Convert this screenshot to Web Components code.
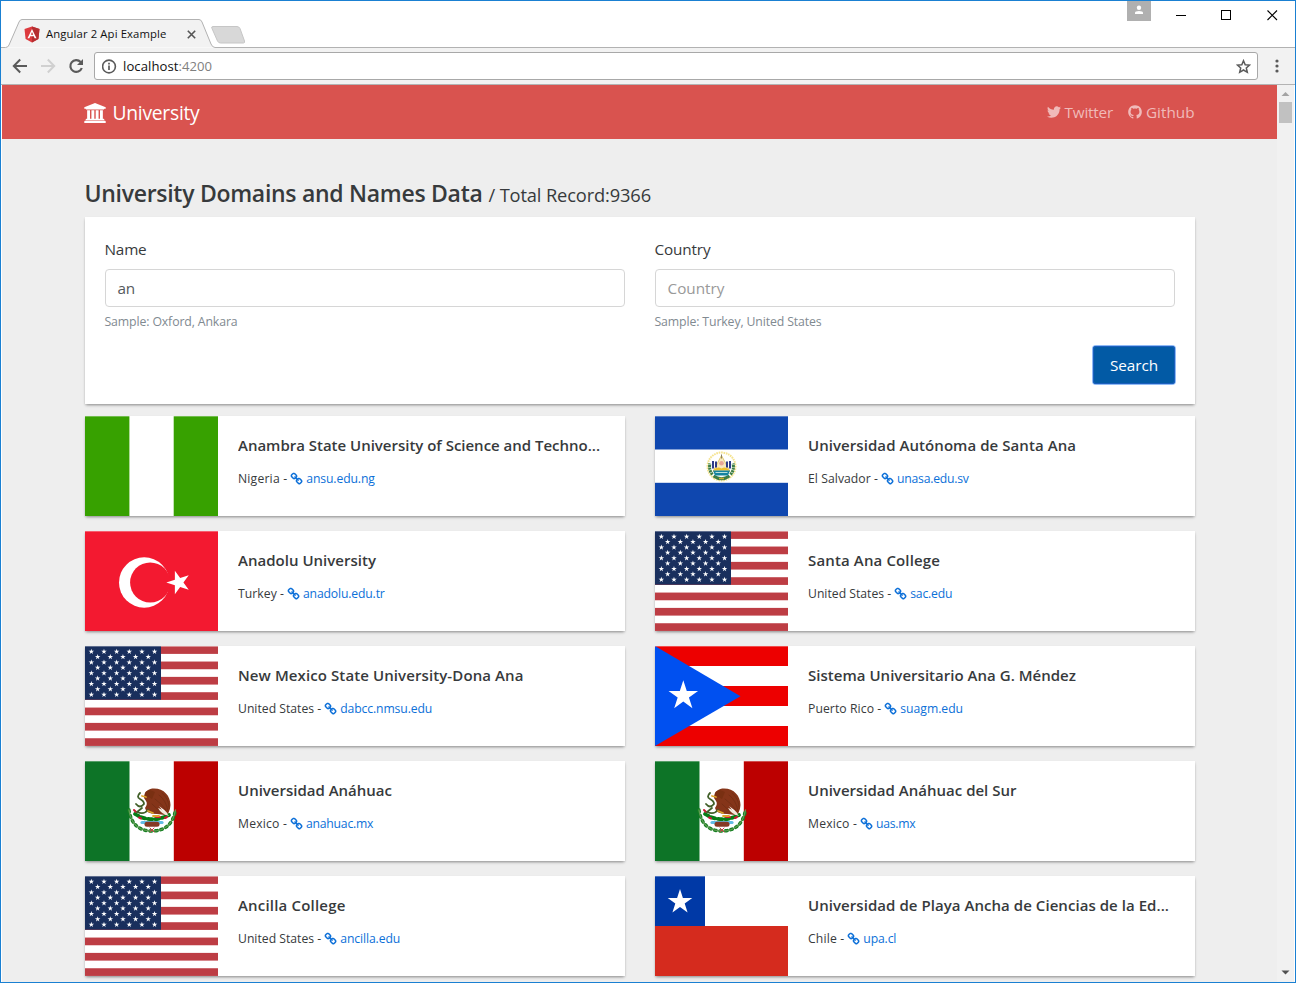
<!DOCTYPE html>
<html lang="en">
<head>
<meta charset="utf-8">
<title>Angular 2 Api Example</title>
<style>
html,body{margin:0;padding:0;background:#eee}
body{font-family:"Open Sans","Noto Sans",sans-serif;color:#373a3c;overflow:hidden}
</style>
</head>
<body>
<browser-window>
  <browser-tabs slot="tabs"></browser-tabs>
  <browser-toolbar slot="toolbar"></browser-toolbar>
  <university-app></university-app>
</browser-window>
<script>
const define = (name, html, setup) => customElements.define(name, class extends HTMLElement {
  connectedCallback() {
    if (this.shadowRoot) return;
    const t = document.createElement('template');
    t.innerHTML = typeof html === 'function' ? html(this) : html;
    this.attachShadow({mode: 'open'}).appendChild(t.content.cloneNode(true));
    if (setup) setup(this);
  }
});

/* Single line of text tracked to a given width */
define('fit-text', `<style>:host{display:inline-block;white-space:nowrap}span{display:inline-block}</style><span><slot></slot></span>`, el => {
  const w = +el.getAttribute('w');
  const span = el.shadowRoot.querySelector('span');
  const n = el.textContent.length;
  const real = span.getBoundingClientRect().width;
  if (w && real) span.style.letterSpacing = ((w - real) / n).toFixed(4) + 'px';
});

const ICONS = {
  twitter: ['0 0 1792 1792', 'M1684 408q-67 98-162 167 1 14 1 42 0 130-38 259.5t-115.5 248.5-184.5 210.5-258 146-323 54.5q-271 0-496-145 35 4 78 4 225 0 401-138-105-2-188-64.5t-114-159.5q33 5 61 5 43 0 85-11-112-23-185.500-111.500t-73.500-205.500v-4q68 38 146 41-66-44-105-115t-39-154q0-88 44-163 121 149 294.500 238.500t371.500 99.500q-8-38-8-74 0-134 94.500-228.500t228.500-94.500q140 0 236 102 109-21 205-78-37 115-142 178 93-10 186-50z'],
  github: ['0 0 1792 1792', 'M896 128q209 0 385.500 103t279.500 279.500 103 385.500q0 251-146.500 451.500t-378.500 277.500q-27 5-40-7t-13-30q0-3 .5-76.500t.5-134.500q0-97-52-142 57-6 102.500-18t94-39 81-66.500 53-105 20.500-150.500q0-119-79-206 37-91-8-204-28-9-81 11t-92 44l-38 24q-93-26-192-26t-192 26q-16-11-42.500-27t-83.500-38.500-85-13.500q-45 113-8 204-79 87-79 206 0 85 20.500 150t52.500 105 80.500 67 94 39 102.500 18q-39 36-49 103-21 10-45 15t-57 5-65.500-21.500-55.500-62.500q-19-32-48.500-52t-49.500-24l-20-3q-21 0-29 4.500t-5 11.500 9 14 13 12l7 5q22 10 43.500 38t31.500 51l10 23q13 38 44 61.500t67 30 69.500 7 55.500-3.500l23-4q0 38 .5 88.500t.5 54.500q0 18-13 30t-40 7q-232-77-378.500-277.500t-146.500-451.500q0-209 103-385.500t279.500-279.500 385.500-103z'],
  link: ['64 64 1664 1664', 'M1456 1216q0-40-28-68l-208-208q-28-28-68-28-42 0-72 32 3 3 19 18.500t21.500 21.500 15 19 13 25.500 3.500 27.500q0 40-28 68t-68 28q-15 0-27.500-3.500t-25.500-13-19-15-21.500-21.500-18.500-19q-33 31-33 73 0 40 28 68l206 207q27 27 68 27 40 0 68-26l147-146q28-28 28-67zm-703-705q0-40-28-68l-206-207q-28-28-68-28-39 0-68 27l-147 146q-28 28-28 67 0 40 28 68l208 208q27 27 68 27 42 0 72-31-3-3-19-18.500t-21.500-21.500-15-19-13-25.500-3.500-27.500q0-40 28-68t68-28q15 0 27.500 3.500t25.500 13 19 15 21.500 21.500 18.500 19q33-31 33-73zm895 705q0 120-85 203l-147 146q-83 83-203 83-121 0-204-85l-206-207q-83-83-83-203 0-123 88-209l-88-88q-86 88-208 88-120 0-204-84l-208-208q-84-84-84-204t85-203l147-146q83-83 203-83 121 0 204 85l206 207q83 83 83 203 0 123-88 209l88 88q86-88 208-88 120 0 204 84l208 208q84 84 84 204z'],
  university: ['0 0 1920 1792', 'M960 0l960 384v128h-128q0 26-20.500 45t-48.500 19h-1526q-28 0-48.500-19t-20.500-45h-128v-128zm-704 640h256v768h128v-768h256v768h128v-768h256v768h128v-768h256v768h59q28 0 48.500 19t20.500 45v64h-1664v-64q0-26 20.500-45t48.500-19h59v-768zm1595 960q28 0 48.500 19t20.500 45v128h-1920v-128q0-26 20.500-45t48.500-19h1782z']
};
define('fa-icon', el => {
  const [vb, d] = ICONS[el.getAttribute('name')];
  return `<style>:host{display:block;flex:none}:host([name=link]) path{stroke:currentColor;stroke-width:20}svg{display:block;width:100%;height:100%;fill:currentColor;overflow:visible}</style><svg viewBox="${vb}"><path d="${d}"/></svg>`;
});

/* ---- flags ---- */
const star = (cx, cy, r, rot = -90) => {
  const p = [];
  for (let i = 0; i < 10; i++) {
    const a = (rot + i * 36) * Math.PI / 180, q = i % 2 ? r * .382 : r;
    p.push((cx + q * Math.cos(a)).toFixed(2) + ',' + (cy + q * Math.sin(a)).toFixed(2));
  }
  return `<polygon fill="#fff" points="${p.join(' ')}"/>`;
};
const rect = (x, y, w, h, f) => `<rect x="${x}" y="${y}" width="${w}" height="${h}" fill="${f}"/>`;
const FLAGS = {
  ng: () => rect(0, 0, 44.4, 100, '#37a100') + rect(88.7, 0, 44.3, 100, '#37a100'),
  sv: () => rect(0, 0, 133, 33.5, '#0f47af') + rect(0, 66.8, 133, 33.2, '#0f47af') +
    `<g transform="translate(66.500 50.500)" fill="none">
      <circle r="14" stroke="#f5e38f" stroke-width="2" stroke-dasharray="1.600 .8" transform="rotate(120)"/>
      <path d="M-9 8A11.800 11.800 0 0 1-11.500-3M9 8A11.800 11.800 0 0 0 11.500-3" stroke="#3d7d45" stroke-width="3" stroke-dasharray="2.200 .5"/>
      <path d="M-8 9.500Q0 15 8 9.500" stroke="#3d7d45" stroke-width="3"/>
      <path d="M0-11L-8.500 5h17z" fill="#f7e8c0" stroke="#d7bd52" stroke-width=".8"/>
      <path d="M-8.500 -5.500v7.500M-5.500 -5v6M8.500-5.500v7.500M5.500-5v6" stroke="#18277c" stroke-width="1.800"/>
      <path d="M0-12v4" stroke="#8a8060" stroke-width="1"/>
      <circle cy="-3.200" r="2.300" fill="#e8a595"/>
      <path d="M-8.500 4Q-4-1 0 2Q4-1 8.500 4z" fill="#efc22c"/>
      <path d="M-8.500 4h17l-2 5h-13z" fill="#1583a0"/><path d="M-6 6h12" stroke="#b9e1dc" stroke-width="1"/>
      <path d="M-2.500 12h5" stroke="#c9ac32" stroke-width="1.500"/></g>`,
  tr: () => rect(0, 0, 133, 100, '#f31930') + '<circle cx="59.200" cy="51.500" r="25.200" fill="#fff"/><circle cx="65.200" cy="51.500" r="20.100" fill="#f31930"/>' + star(93.7, 51.5, 12.4, 180),
  us: () => {
    let s = '';
    for (let i = 0; i < 13; i += 2) s += rect(0, (i * 7.67 + .2).toFixed(2), 133, 7.7, '#bd3d44');
    s += rect(0, 0, 76, 53.7, '#192f5d');
    for (let r = 0; r < 9; r++) for (let c = r % 2; c < 11; c += 2) s += star(6.35 + c * 6.32, 5.6 + r * 5.37, 2.9);
    return s;
  },
  pr: () => [0, 40, 80].map(y => rect(0, y, 133, 20, '#ed0000')).join('') + '<path d="M0 0L85.500 50.200L0 100z" fill="#0050f0"/>' + star(28.3, 49.7, 15.5),
  mx: () => rect(0, 0, 44.5, 100, '#0d7427') + rect(88.8, 0, 44.2, 100, '#bc0000') +
    `<g fill="none" stroke-linecap="round">
      <path d="M44 49C46 63 54 70 67 70S88 63 90.500 49" stroke="#147f20" stroke-width="3.400" stroke-dasharray="1.800 3.600"/>
      <path d="M44 49C46 63 54 70 67 70S88 63 90.500 49" stroke="#5f9a52" stroke-width="1.300"/>
      <path d="M50 53Q66 63 84 54" stroke="#087d16" stroke-width="3.800" stroke-dasharray="4 3"/>
      <path d="M57 61.500h20" stroke="#62bde5" stroke-width="3.200"/>
      <path d="M62 63.200h10" stroke="#863a24" stroke-width="5"/>
      <path d="M65 67l4 4M69 67l-4 4" stroke="#ce3940" stroke-width="1"/>
      <path d="M49 49l2 2M54 56.500l2 1M80 57l2-1M71 56h4" stroke="#ca1932" stroke-width="2"/>
      <path d="M59 37C59 30 64 27.500 69 27.500C79 27.500 85.500 35 85.500 44Q85.500 48 83 53Q80 49 74 45Q79 51 80 54L72 53Q61 53 60 47Q63 43 61 40z" fill="#853519"/>
      <path d="M60 34Q59 30 65 29L70 31L67 38z" fill="#793012"/>
      <path d="M74 34Q81 39 83 50M70 38Q77 43 81 49M67 43Q71 47 76 51M77 32Q84 38 84 46" stroke="#6a2b12" stroke-width=".6"/>
      <path d="M73 47Q80 49 84 55Q76 53 73 47z" fill="#f3e9dd"/>
      <path d="M55 32Q51 36 55 38T59 43Q55 48 51 43M57 47L52 51Q59 54 63 49" stroke="#426029" stroke-width="1.800"/>
      <path d="M57 35l4 1M63 50l5 2M68 55h6" stroke="#dda42b" stroke-width="1.800"/>
    </g>`,
  cl: () => rect(0, 50, 133, 50, '#d52b1e') + rect(0, 0, 50, 50, '#0039a6') + star(25, 26, 12.9)
};
define('country-flag', el => `<style>:host{display:block;width:133px;height:100px;flex:none}svg{display:block}</style>
<svg width="133" height="100" viewBox="0 0 133 100"><rect width="133" height="100" fill="#fff"/>${FLAGS[el.getAttribute('code')]()}<rect width="133" height="1" fill="#fff" opacity=".3"/></svg>`);

/* ---- browser chrome ---- */
define('browser-window', `<style>
:host{display:flex;flex-direction:column;box-sizing:border-box;width:1296px;height:983px;border:1px solid #1a80d2;background:#fff;overflow:hidden}
.view{flex:1;display:flex;min-height:0;padding-left:1px;padding-right:1px}
.page{flex:1;min-width:0;overflow:hidden;background:#eee}
.bar{width:17px;background:#f1f1f1;display:flex;flex-direction:column;align-items:center}
.thumb{width:13px;height:21px;background:#c1c1c1}.sp{flex:1}svg{display:block}
</style><slot name="tabs"></slot><slot name="toolbar"></slot>
<div class="view"><div class="page"><slot></slot></div>
<div class="bar"><svg width="17" height="17"><path d="M4.500 11L8.500 7L12.500 11z" fill="#a3a3a3"/></svg><div class="thumb"></div><div class="sp"></div><svg width="17" height="17"><path d="M4.500 5.500L8.500 9.500L12.500 5.500z" fill="#505050"/></svg></div></div>`);

define('browser-tabs', `<style>
:host{display:flex;position:relative;height:47px;flex:none;background:#fff}
.shape{position:absolute;left:0;top:0}
.tab{position:relative;display:flex;align-items:center;height:28px;margin:19px 0 0 23px;width:176px}
.tab fit-text{font-size:11.3px;line-height:28px;color:#111;margin-left:6px;flex:1}
.x{margin-right:4.500px}
.sys{position:relative;margin-left:auto;display:flex;height:28px}
svg{display:block}.user{margin-right:10px}
</style>
<svg class="shape" width="1294" height="47"><path d="M0 46.500H4.500Q7 46.500 8 44L18 21Q19 18.500 21 18.500H198Q200 18.500 201 21L210 43Q211.500 46.500 214 46.500H1294" fill="#f2f2f2" stroke="#b2b2b2"/>
<path d="M212 25.500H236Q238 25.500 239 27.500L243.500 40Q244 42 242.500 42H219.500Q217.500 42 216.500 40L211 27.500Q210 25.500 212 25.500z" fill="#d8d8d8" stroke="#c6c6c6"/></svg>
<div class="tab"><svg width="16" height="17" viewBox="0 0 16 17"><path d="M8 .5L15.500 3L14.400 13L8 16.500L1.600 13L.5 3z" fill="#dd3a3e"/><path d="M8 .5L15.500 3L14.400 13L8 16.500z" fill="#b52e31"/><path d="M8 3L3.500 12.200H5.400L6.200 10.200H9.800L10.600 12.200H12.500zM8 5.900L9.200 8.700H6.800z" fill="#fff" fill-rule="evenodd"/></svg>
<fit-text w="120.500">Angular 2 Api Example</fit-text><svg class="x" width="9" height="9" viewBox="0 0 9 9"><path d="M.8.8l7.400 7.400M8.200.8L.8 8.200" stroke="#555" stroke-width="1.600"/></svg></div>
<div class="sys"><svg class="user" width="24" height="20"><rect width="24" height="20" fill="#b0b0b0"/><circle cx="12" cy="6.800" r="2.200" fill="#fff"/><path d="M8 13v-1.200Q8 10 12 10T16 11.800V13z" fill="#fff"/></svg>
<svg width="134" height="28"><path d="M15 14.500h10" stroke="#000"/><rect x="60.500" y="9.500" width="9" height="9" fill="none" stroke="#000"/><path d="M106.500 9.500l9.500 9.500M116 9.500l-9.500 9.500" stroke="#000" stroke-width="1.100"/></svg></div>`);

define('browser-toolbar', `<style>
:host{display:flex;align-items:center;height:37px;flex:none;box-sizing:border-box;background:#f2f2f2;border-bottom:1px solid #b3b3b3}
svg{display:block;flex:none}
.nav{display:flex;gap:12px;margin-left:11px;width:82px}
.url{flex:1;display:flex;align-items:center;box-sizing:border-box;height:28px;border:1px solid #a8a8a8;border-radius:3px;background:#fff;padding:0 6.500px 0 7px;font-size:13.1px;line-height:26px;color:#111}
.url fit-text:first-of-type{margin-left:6px}
.port{color:#808080}.star{margin-left:auto}
.menu{margin:0 16.500px 0 16.500px}
</style>
<div class="nav"><svg width="16" height="16" viewBox="0 0 16 16"><path d="M15 8H2M8.200 1.500L1.800 8l6.400 6.500" fill="none" stroke="#5a5a5a" stroke-width="2"/></svg>
<svg width="16" height="16" viewBox="0 0 16 16"><path d="M1 8h13M7.800 1.500L14.200 8l-6.400 6.500" fill="none" stroke="#d0d0d0" stroke-width="2"/></svg>
<svg width="16" height="16" viewBox="0 0 16 16"><path d="M13.800 10A5.900 5.900 0 1 1 12.600 4" fill="none" stroke="#5a5a5a" stroke-width="2.200"/><path d="M15 1v6H9z" fill="#5a5a5a"/></svg></div>
<div class="url"><svg width="15" height="15" viewBox="0 0 15 15"><circle cx="7" cy="7.500" r="6.400" fill="none" stroke="#5a5a5a" stroke-width="1.600"/><path d="M7 6.500v4.500M7 3.800v1.600" stroke="#5a5a5a" stroke-width="1.700"/></svg>
<fit-text w="55.500">localhost</fit-text><fit-text class="port" w="33.500">:4200</fit-text>
<svg class="star" width="15" height="15" viewBox="0 0 15 15"><path d="M7.500 1.700L9.200 5.700L13.600 6.100L10.300 9L11.300 13.300L7.500 11L3.700 13.300L4.700 9L1.400 6.100L5.800 5.700z" fill="none" stroke="#5a5a5a" stroke-width="1.500"/></svg></div>
<svg class="menu" width="4" height="14" viewBox="0 0 4 14"><g fill="#5a5a5a"><circle cx="2" cy="2" r="1.600"/><circle cx="2" cy="7" r="1.600"/><circle cx="2" cy="12" r="1.600"/></g></svg>`);

/* ---- page ---- */
define('site-nav', `<style>
:host{display:flex;align-items:center;box-sizing:border-box;height:54px;background:#d9534f;padding:0 82.500px 0 82px;color:#fff}
.brand{display:flex;align-items:center;font-size:19.3px;line-height:28px}
.brand fit-text{margin-top:2px}
.brand fa-icon{width:22px;height:20px;margin-right:6.500px;margin-top:2px}
.links{margin-left:auto;display:flex;color:#f0bab9;font-size:15.3px;line-height:24px}
.links div{display:flex;align-items:center}
.links fa-icon{width:16px;height:16px;margin-right:3px}
.links div+div{margin-left:14px}
</style><div class="brand"><fa-icon name="university"></fa-icon><fit-text w="87">University</fit-text></div>
<div class="links"><div><fa-icon name="twitter"></fa-icon><fit-text w="48.500">Twitter</fit-text></div><div><fa-icon name="github"></fa-icon><fit-text w="48.500">Github</fit-text></div></div>`);

define('form-field', `<style>
:host{display:block;width:520px}
.label{font-size:15.3px;line-height:24px;height:24px;margin-left:-.5px}
.input{box-sizing:border-box;height:38px;margin-top:8px;border:1px solid #d6d6d6;border-radius:4px;padding-left:11.500px;font-size:15.3px;line-height:36px;color:#55595c;background:#fff}
:host([empty]) .input{color:#999}
.hint{font-size:12.3px;line-height:19px;margin:5px 0 0 -.5px;color:#818a91}
::slotted(*){display:block}
</style><div class="label"><slot name="label"></slot></div><div class="input"><slot name="value"></slot></div><div class="hint"><slot name="hint"></slot></div>`);

define('search-panel', `<style>
:host{display:block;box-sizing:border-box;height:187px;padding:20px;background:#fff;box-shadow:0 2px 3px -1px rgba(0,0,0,.36),0 1px 2px rgba(0,0,0,.1)}
.row{display:flex;justify-content:space-between}
.foot{display:flex;justify-content:flex-end;margin-top:15px}
.btn{box-sizing:border-box;width:82px;height:38px;border-radius:3px;background:#025aa5;color:#fff;font-size:15.3px;line-height:38px;text-align:center;box-shadow:0 0 0 1px #8fbaf5,inset 0 0 0 1px #1c5fbd}
</style><div class="row">
<form-field><fit-text slot="label" w="42">Name</fit-text><fit-text slot="value" w="17.500">an</fit-text><fit-text slot="hint" w="133">Sample: Oxford, Ankara</fit-text></form-field>
<form-field empty><fit-text slot="label" w="56">Country</fit-text><fit-text slot="value" w="57">Country</fit-text><fit-text slot="hint" w="167">Sample: Turkey, United States</fit-text></form-field>
</div><div class="foot"><div class="btn"><fit-text w="48">Search</fit-text></div></div>`);

define('uni-card', el => {
  const a = n => el.getAttribute(n);
  return `<style>
:host{display:flex;width:540px;height:100px;background:#fff;box-shadow:0 2px 3px -1px rgba(0,0,0,.36),0 1px 2px rgba(0,0,0,.1)}
.body{margin-left:20px;padding-top:20px}
.title{font-size:15px;font-weight:600;line-height:18px;height:18px;overflow:hidden}
.title fit-text{display:block}
.meta{display:flex;align-items:center;font-size:12.2px;line-height:18px;margin-top:16px}
.meta fa-icon{width:12px;height:12px;margin:0 3px 0 4px}
.link{display:flex;align-items:center;color:#0c70d8}
</style><country-flag code="${a('flag')}"></country-flag><div class="body">
<div class="title"><fit-text w="${a('tw')}">${a('name')}</fit-text></div>
<div class="meta"><fit-text w="${a('cw')}">${a('country')} -</fit-text><div class="link"><fa-icon name="link"></fa-icon><fit-text w="${a('lw')}">${a('url')}</fit-text></div></div></div>`;
});

const DATA = [
  ['ng', 'Anambra State University of Science and Techno...', 362, 'Nigeria', 49.3, 'ansu.edu.ng', 68.5],
  ['sv', 'Universidad Autónoma de Santa Ana', 268, 'El Salvador', 70, 'unasa.edu.sv', 71.7],
  ['tr', 'Anadolu University', 138, 'Turkey', 46, 'anadolu.edu.tr', 81.7],
  ['us', 'Santa Ana College', 132, 'United States', 83.2, 'sac.edu', 42],
  ['us', 'New Mexico State University-Dona Ana', 285.5, 'United States', 83.2, 'dabcc.nmsu.edu', 92],
  ['pr', 'Sistema Universitario Ana G. Méndez', 268, 'Puerto Rico', 73.3, 'suagm.edu', 62.7],
  ['mx', 'Universidad Anáhuac', 154, 'Mexico', 49, 'anahuac.mx', 67.2],
  ['mx', 'Universidad Anáhuac del Sur', 208.5, 'Mexico', 49, 'uas.mx', 39.3],
  ['us', 'Ancilla College', 107.5, 'United States', 83.2, 'ancilla.edu', 60],
  ['cl', 'Universidad de Playa Ancha de Ciencias de la Ed...', 361, 'Chile', 36.3, 'upa.cl', 33]
];
define('university-app', `<style>
:host{display:block}
main{width:1110px;margin-left:83px;padding-top:39px}
.head{display:flex;align-items:baseline;height:39px;line-height:30px;margin-left:-.5px}
.head .t{font-size:23px;font-weight:600}
.head .s{font-size:18.300px;margin-left:6px}
.grid{display:grid;grid-template-columns:540px 540px;gap:15px 30px;margin-top:12px}
</style><site-nav></site-nav><main>
<div class="head"><fit-text class="t" w="398">University Domains and Names Data</fit-text><fit-text class="s" w="162.500">/ Total Record:9366</fit-text></div>
<search-panel></search-panel>
<div class="grid">${DATA.map(d => `<uni-card flag="${d[0]}" name="${d[1]}" tw="${d[2]}" country="${d[3]}" cw="${d[4]}" url="${d[5]}" lw="${d[6]}"></uni-card>`).join('')}</div></main>`);
</script>
</body>
</html>
